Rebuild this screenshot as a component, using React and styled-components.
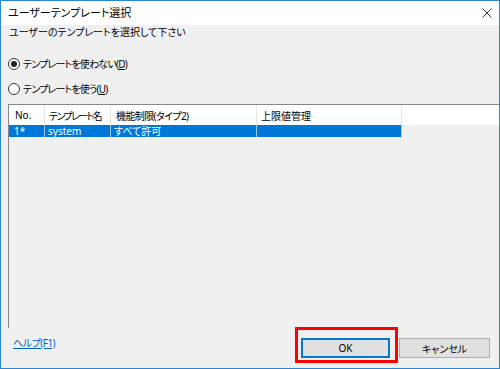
import React from "react";
import styled, { createGlobalStyle } from "styled-components";

const GlobalStyle = createGlobalStyle`
  html, body {
    margin: 0;
    padding: 0;
    background: #ffffff;
  }
  * {
    box-sizing: border-box;
  }
`;

const Window = styled.div`
  width: 500px;
  height: 369px;
  border: 1px solid #2b87d3;
  display: flex;
  flex-direction: column;
  overflow: hidden;
  font-family: "Noto Sans", "Noto Sans CJK JP", sans-serif;
  font-feature-settings: "palt";
  font-size: 10px;
  color: #000;
`;

const TitleBar = styled.div`
  height: 24px;
  flex-shrink: 0;
  background: #ffffff;
  display: flex;
  align-items: center;
  justify-content: space-between;
  padding: 0 7px 0 7px;
`;

const Title = styled.span`
  font-size: 11px;
  line-height: 14px;
`;

const Body = styled.div`
  flex: 1;
  background: #f0f0f0;
  display: flex;
  flex-direction: column;
  min-height: 0;
`;

const Prompt = styled.div`
  padding-left: 8px;
  line-height: 14px;
  margin-bottom: 12px;
`;

const RadioRow = styled.label`
  height: 25px;
  display: flex;
  align-items: center;
  padding-left: 7px;
  gap: 3px;
  letter-spacing: -0.8px;
`;

const RadioCircle = styled.span`
  width: 12px;
  height: 12px;
  border-radius: 50%;
  border: 1px solid #333;
  background: #fff;
  display: flex;
  align-items: center;
  justify-content: center;

  &::after {
    content: "";
    width: 6px;
    height: 6px;
    border-radius: 50%;
    background: ${(p) => (p.checked ? "#222" : "transparent")};
  }
`;

const Key = styled.span`
  text-decoration: underline;
`;

const List = styled.div`
  flex: 1;
  margin: 3px 0 0 7px;
  width: 520px;
  border-top: 1px solid #828790;
  border-left: 1px solid #828790;
  background: #f0f0f0;
  display: flex;
  flex-direction: column;
`;

const HeaderRow = styled.div`
  height: 20px;
  display: flex;
  background: #ffffff;
`;

const HeaderCell = styled.div`
  width: ${(p) => p.w}px;
  flex: ${(p) => (p.fill ? 1 : "none")};
  padding-left: ${(p) => p.pad ?? 4}px;
  letter-spacing: ${(p) => p.ls ?? 0}px;
  border-right: ${(p) => (p.fill ? "none" : "1px solid #e5e5e5")};
  display: flex;
  align-items: center;
  white-space: nowrap;
  overflow: hidden;
`;

const DataRow = styled.div`
  height: 12px;
  display: flex;
`;

const DataCell = styled.div`
  width: ${(p) => p.w}px;
  padding-left: ${(p) => p.pad ?? 3}px;
  background: #0078d7;
  color: #fff;
  border-right: 1px solid #9cc8ee;
  display: flex;
  align-items: center;
  white-space: nowrap;
  line-height: 12px;
`;

const Footer = styled.div`
  height: 40px;
  flex-shrink: 0;
  display: flex;
  align-items: flex-start;
  padding: 10px 9px 0 12px;
`;

const HelpLink = styled.a`
  color: #0066cc;
  text-decoration: underline;
  line-height: 11px;
  letter-spacing: -0.5px;
  cursor: pointer;
`;

const Buttons = styled.div`
  margin-left: auto;
  display: flex;
  gap: 9px;
`;

const Highlight = styled.div`
  position: relative;

  &::after {
    content: "";
    position: absolute;
    top: -11px;
    left: -6px;
    right: -8px;
    bottom: -5px;
    border: 3px solid #ff0000;
    pointer-events: none;
  }
`;

const Button = styled.button`
  width: ${(p) => p.w}px;
  height: 20px;
  padding: 0;
  font: inherit;
  color: #000;
  background: #e1e1e1;
  border: ${(p) => (p.primary ? "2px solid #0078d7" : "1px solid #adadad")};
  display: flex;
  align-items: center;
  justify-content: center;
`;

const CloseIcon = () => (
  <svg width="10" height="10" viewBox="0 0 10 10">
    <path d="M0.5 0.5 L9.5 9.5 M9.5 0.5 L0.5 9.5" stroke="#333" strokeWidth="1" />
  </svg>
);

const columns = [
  { w: 36, pad: 6, head: "No.", value: "1*", vpad: 5 },
  { w: 66, ls: -1.6, head: "テンプレート名", value: "system" },
  { w: 146, pad: 5, ls: -0.6, head: "機能制限(タイプ2)", value: "すべて許可" },
  { w: 145, head: "上限値管理", value: "" },
];

export default function App() {
  return (
    <>
      <GlobalStyle />
      <Window>
        <TitleBar>
          <Title>ユーザーテンプレート選択</Title>
          <CloseIcon />
        </TitleBar>
        <Body>
          <Prompt>ユーザーのテンプレートを選択して下さい</Prompt>
          <RadioRow>
            <RadioCircle checked />
            <span>
              テンプレートを使わない(<Key>D</Key>)
            </span>
          </RadioRow>
          <RadioRow>
            <RadioCircle />
            <span>
              テンプレートを使う(<Key>U</Key>)
            </span>
          </RadioRow>
          <List>
            <HeaderRow>
              {columns.map((c) => (
                <HeaderCell key={c.head} w={c.w} pad={c.pad} ls={c.ls}>
                  {c.head}
                </HeaderCell>
              ))}
              <HeaderCell fill />
            </HeaderRow>
            <DataRow>
              {columns.map((c) => (
                <DataCell key={c.head} w={c.w} pad={c.vpad}>
                  {c.value}
                </DataCell>
              ))}
            </DataRow>
          </List>
          <Footer>
            <HelpLink>ヘルプ(F1)</HelpLink>
            <Buttons>
              <Highlight>
                <Button primary w={89}>
                  OK
                </Button>
              </Highlight>
              <Button w={91}>キャンセル</Button>
            </Buttons>
          </Footer>
        </Body>
      </Window>
    </>
  );
}
